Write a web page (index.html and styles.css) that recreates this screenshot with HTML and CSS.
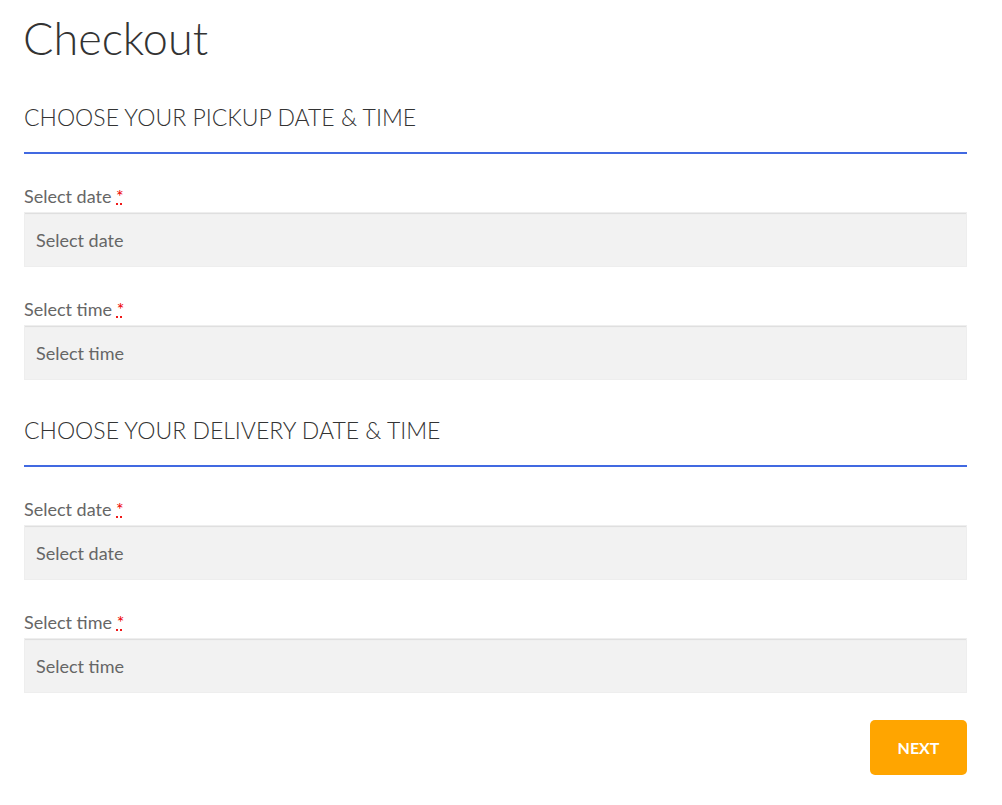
FILE: index.html
```html
<!DOCTYPE html>
<html>
<head>
<meta charset="utf-8">
<link rel="stylesheet" href="styles.css">
</head>
<body>
<main class="checkout">
  <h1 class="title">Checkout</h1>
  <section class="section">
    <h2 class="section-title">Choose your pickup date &amp; time</h2>
    <div class="field">
      <label class="label">Select date <abbr class="req" title="required">*</abbr></label>
      <div class="input">Select date</div>
    </div>
    <div class="field">
      <label class="label">Select time <abbr class="req" title="required">*</abbr></label>
      <div class="input">Select time</div>
    </div>
  </section>
  <section class="section">
    <h2 class="section-title">Choose your delivery date &amp; time</h2>
    <div class="field">
      <label class="label">Select date <abbr class="req" title="required">*</abbr></label>
      <div class="input">Select date</div>
    </div>
    <div class="field">
      <label class="label">Select time <abbr class="req" title="required">*</abbr></label>
      <div class="input">Select time</div>
    </div>
  </section>
  <div class="actions">
    <button class="next">NEXT</button>
  </div>
</main>
</body>
</html>
```
FILE: styles.css
```css
html, body {
  margin: 0;
  padding: 0;
  background: #fff;
}
body {
  font-family: Lato, "Open Sans", sans-serif;
  color: #333;
}
.checkout {
  padding: 0 35px 0 24px;
  display: flex;
  flex-direction: column;
}
.title {
  font-weight: 300;
  font-size: 45px;
  line-height: 60px;
  margin: 8px 0 0 -1px;
  color: #333;
}
.section-title {
  font-weight: 300;
  font-size: 23px;
  line-height: 30px;
  text-transform: uppercase;
  margin: 0;
  padding: 34px 0 20px;
  border-bottom: 2px solid #4169e1;
  color: #333;
}
.section + .section .section-title {
  padding-top: 35px;
}
.field {
  margin-top: 32px;
}
.label {
  display: block;
  font-size: 18px;
  line-height: 20px;
  color: #666;
  margin-bottom: 6px;
}
.req {
  color: #e00;
  text-decoration: underline dotted;
  border: none;
}
.input {
  height: 55px;
  box-sizing: border-box;
  background: #f2f2f2;
  border: 1px solid #eee;
  box-shadow: inset 0 2px 1px -1px #ddd;
  padding: 0 11px;
  display: flex;
  align-items: center;
  font-size: 18px;
  color: #666;
}
.actions {
  display: flex;
  justify-content: flex-end;
  margin-top: 27px;
}
.next {
  background: #ffa500;
  color: #fff;
  border: none;
  border-radius: 5px;
  width: 97px;
  height: 55px;
  font-family: Lato, sans-serif;
  font-weight: 700;
  font-size: 16px;
}
```
